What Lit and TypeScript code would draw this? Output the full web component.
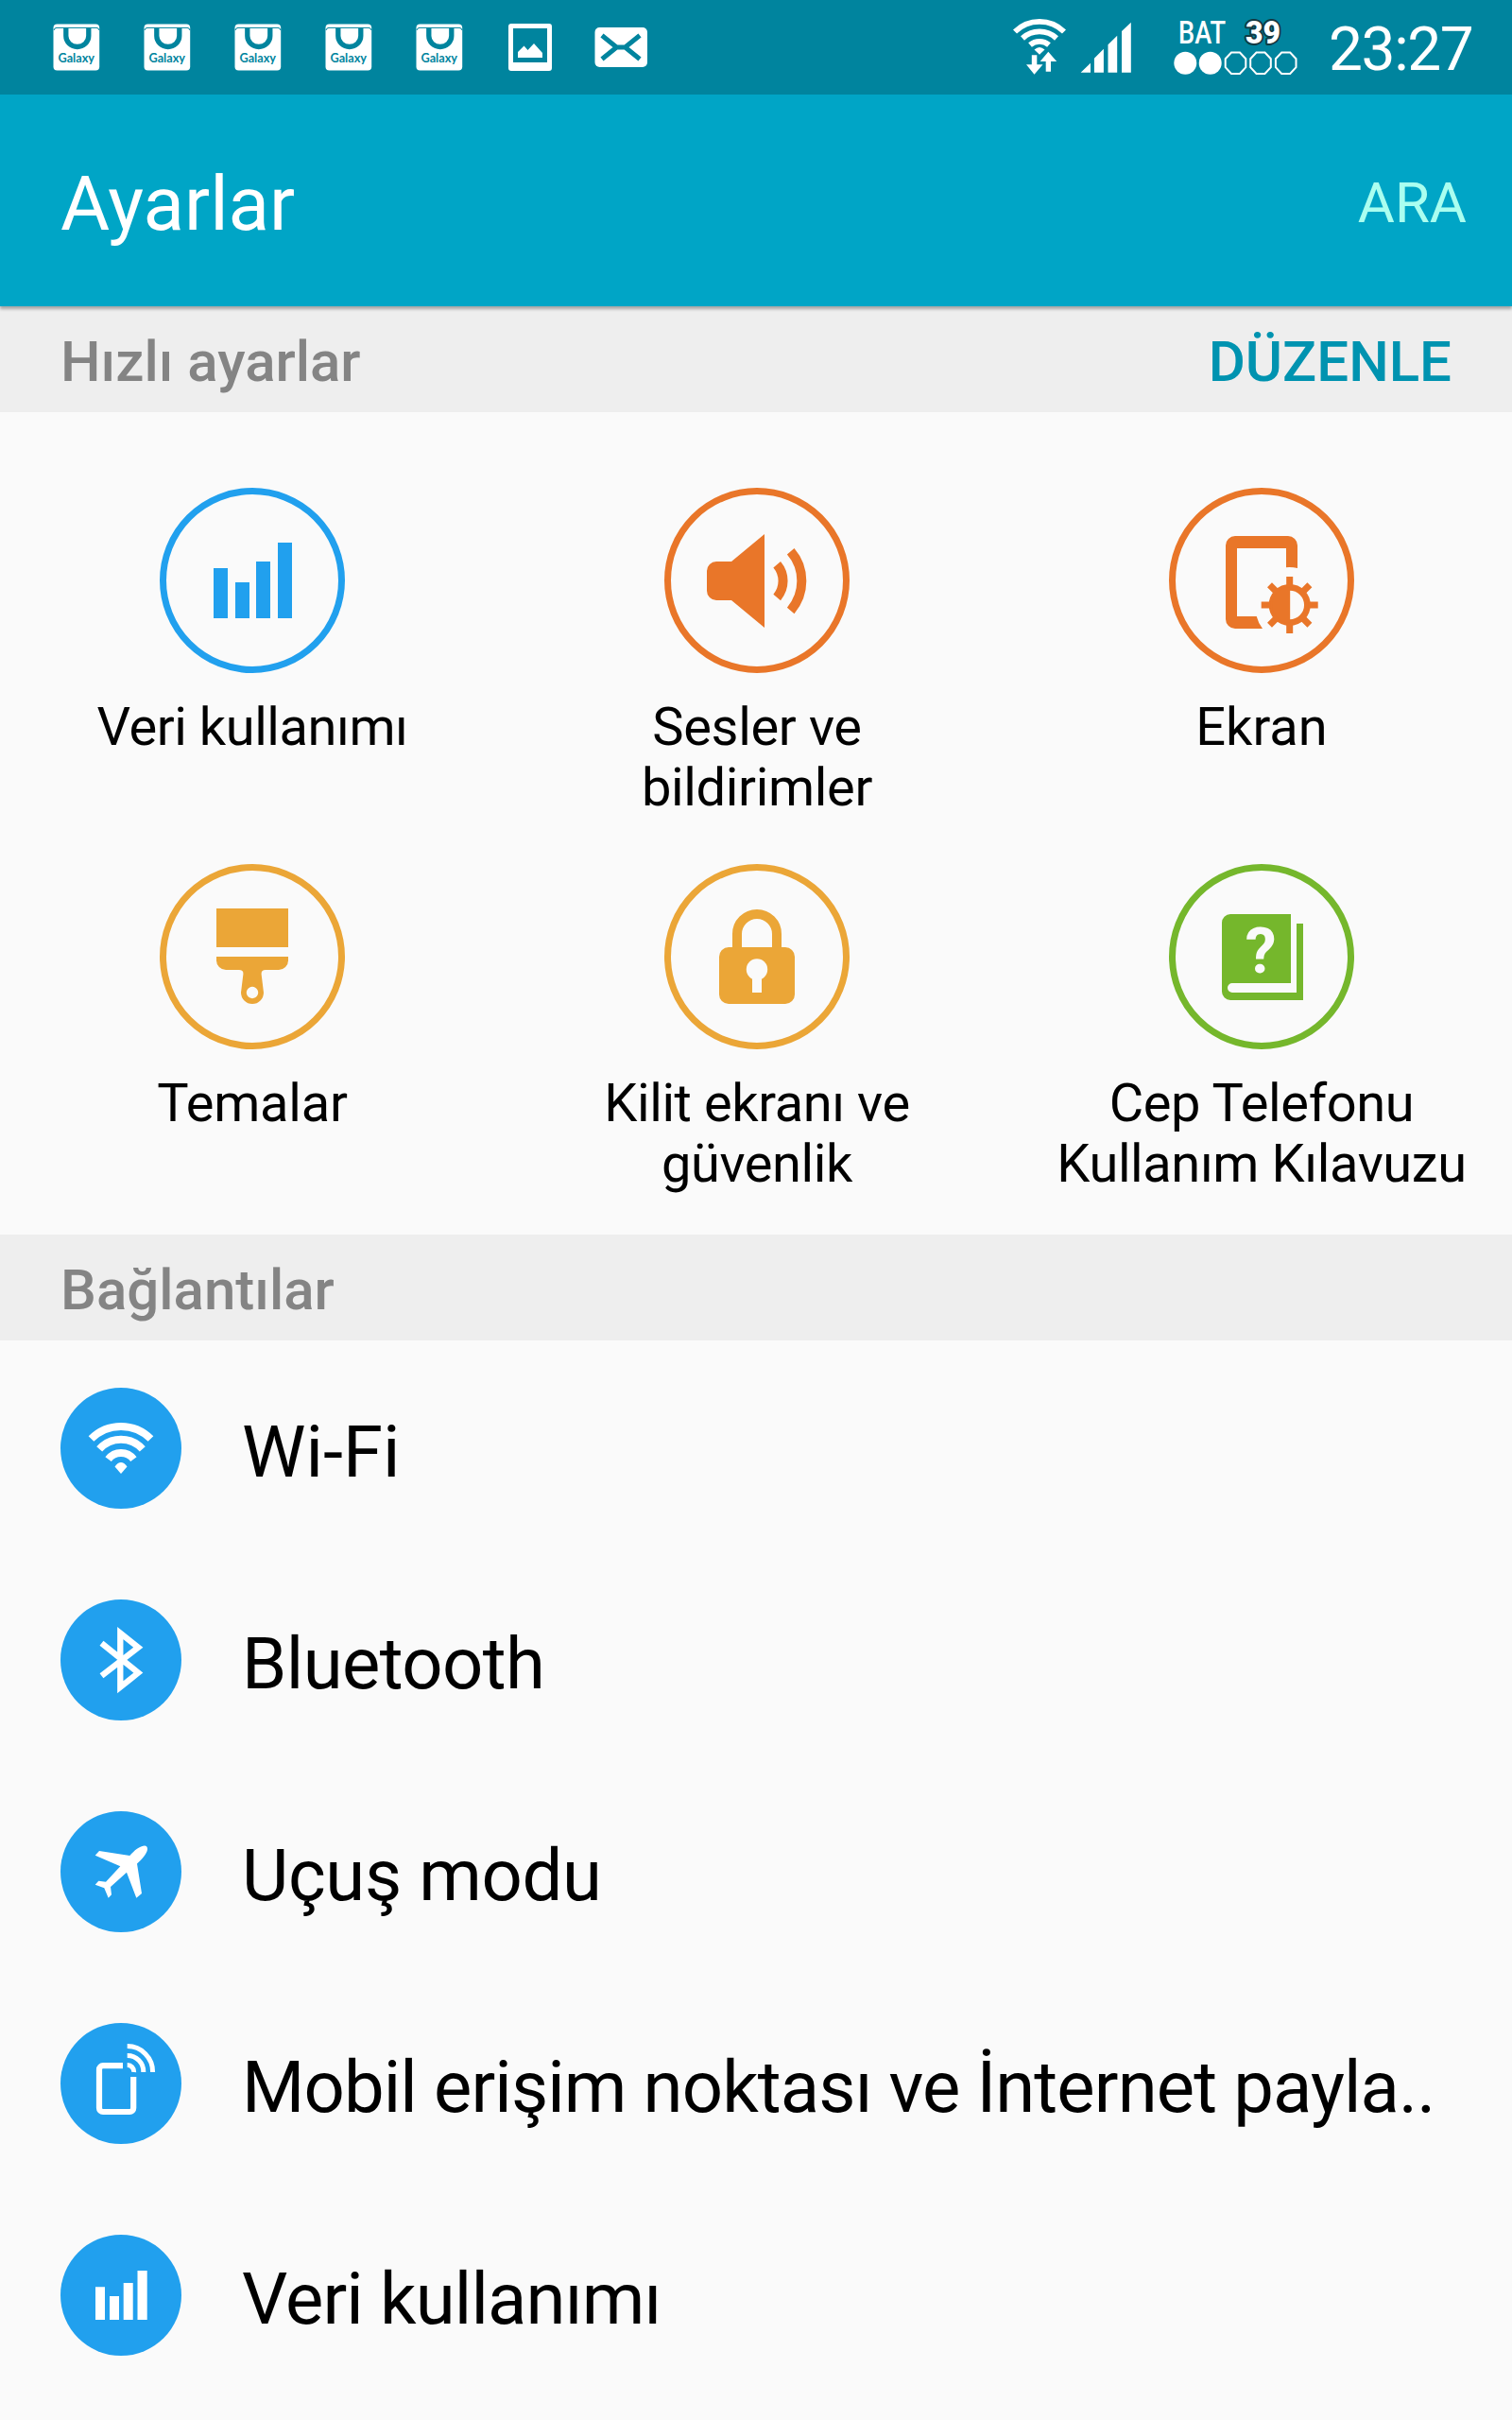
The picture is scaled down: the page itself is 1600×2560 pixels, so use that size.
import { LitElement, html, css, svg, SVGTemplateResult } from "lit";
import { customElement, property } from "lit/decorators.js";

const quickIcons: Record<string, SVGTemplateResult> = {
  data: svg`<path d="M57 85h15v53h-15zM80 100h15v38h-15zM102 78h15v60h-15zM125 58h15v80h-15z"/>`,
  sound: svg`
    <path d="M55 78H71L106 49V148L71 119H55a10 10 0 0 1-10-10V88a10 10 0 0 1 10-10z"/>
    <g fill="none" stroke="currentColor" stroke-width="10">
      <path d="M119.2 81.2a27 27 0 0 1 0 34.8"/>
      <path d="M133.7 67.3a48 48 0 0 1 0 62.6"/>
    </g>`,
  display: svg`
    <path d="M136 85V61a10 10 0 0 0-10-10H70a10 10 0 0 0-10 10V139a10 10 0 0 0 10 10H99Q94.500 143 92.700 136H72V64H124V84.200Q130 83.700 136 85z"/>
    <circle cx="127.700" cy="124" r="18.700" fill="none" stroke="currentColor" stroke-width="6.700"/>
    <path d="M128.200 105V143A19 19 0 0 1 128.200 105z"/>
    <g fill="none" stroke="currentColor" stroke-width="7">
      <path d="M127.700 94v10M127.700 144v10M97.700 124h10M147.700 124h10"/>
      <path d="M106.500 102.800l7 7M141.900 138.200l7 7M106.500 145.200l7-7M141.900 109.800l7-7"/>
    </g>`,
  themes: svg`
    <path d="M60 47H136V88H60z"/>
    <path fill-rule="evenodd" d="M60 98H136V102a10 10 0 0 1-10 10H112q-4.700 0-4.400 4.500L110 136a12 12 0 0 1-24 0L88.400 116.500q.300-4.500-4.400-4.500H70a10 10 0 0 1-10-10zM98 129.800a6.200 6.200 0 1 0 .010 0z"/>`,
  lock: svg`
    <path d="M77 90V74a21 21 0 0 1 42 0V90" fill="none" stroke="currentColor" stroke-width="10"/>
    <rect x="58" y="88" width="80" height="60" rx="10"/>
    <circle cx="98" cy="111.500" r="11.200" fill="#fafafa"/>
    <path d="M93 118h10v18h-10z" fill="#fafafa"/>`,
  manual: svg`
    <path d="M65 53H129V126H67a5 5 0 0 0 0 10H135V63H142V144H65a9 9 0 0 1-9-9V62a9 9 0 0 1 9-9z"/>
    <text class="mark" x="97" y="115" text-anchor="middle">?</text>`,
};

const rowIcons: Record<string, SVGTemplateResult> = {
  wifi: svg`
    <g fill="none" stroke="#fff" stroke-width="8">
      <path d="M32.500 54a44.400 44.400 0 0 1 63 0"/>
      <path d="M41.200 64.900a30.700 30.700 0 0 1 45.600 0"/>
      <path d="M50.600 75.700a16.800 16.800 0 0 1 26.800 0"/>
    </g>
    <path d="M57.500 83.500Q64 74.700 70.500 83.500L64 91z"/>`,
  bluetooth: svg`<path d="M43.500 46.200L82.300 77.600 63.300 92.800V35.500L82.300 50.800 43.500 80.800" fill="none" stroke="#fff" stroke-width="6.300"/>`,
  plane: svg`<path d="M41 42L73.300 47C78 41.500 84 36.300 89.500 36.400Q92.300 37 92 40.500C91.500 45 86 51 81 55.500L86 87 80.300 91.700 70 64.700 53 80 54 88.300 50.700 91.700 46.300 81.300 36.700 77.700 40.300 73.700 48 74.700 63.300 58.300 36.700 46.700z"/>`,
  hotspot: svg`
    <path d="M66 45.200H45a4 4 0 0 0-4 4V90a4 4 0 0 0 4 4H73.200a4 4 0 0 0 4-4V57" fill="none" stroke="#fff" stroke-width="6.200"/>
    <g fill="none" stroke="#fff" stroke-width="5">
      <path d="M70.700 24.600A27 27 0 0 1 97.600 52"/>
      <path d="M70.700 34.500A17 17 0 0 1 87.800 52"/>
      <path d="M70.700 44.500A7 7 0 0 1 77.700 52"/>
    </g>`,
  data: svg`<path d="M37 55.300h10V90h-10zM52 65h10V90h-10zM66.700 51h10V90h-10zM81.500 38h10.200V90h-10.200z"/>`,
};

@customElement("status-bar")
class StatusBar extends LitElement {
  static styles = css`
    :host { display: flex; height: 100px; justify-content: space-between; padding: 0 43px 0 33px; box-sizing: border-box; background: #00849e; color: #fff; }
    .group { display: flex; }
    svg { display: block; height: 100px; fill: #fff; flex: none; }
    .slot { width: 96px; }
    .wifi { width: 56px; }
    .signal { width: 54px; margin-left: 15px; }
    .battery { width: 134px; margin-left: 45px; }
    .brand { font: 700 12.5px Lato, sans-serif; fill: #00849e; }
    .bat { font: 500 33px Roboto, sans-serif; }
    .level { font: 900 33px Roboto, sans-serif; stroke: #123a44; stroke-width: 4px; paint-order: stroke; stroke-linejoin: round; }
    .clock { font: 400 64px/100px Roboto, sans-serif; letter-spacing: -1.4px; width: 151px; margin-left: 30px; padding-top: 3px; box-sizing: border-box; white-space: nowrap; }
  `;

  private bag() {
    return html`<svg class="slot" viewBox="33 0 96 100">
      <rect x="56.500" y="25.500" width="48.700" height="49" rx="4"/>
      <path d="M57 32q.500-2.600 3-2.600H102q2.500 0 3 2.600" fill="none" stroke="#00849e"/>
      <path d="M69.800 29.500V38a12 11.500 0 0 0 24 0V29.500" fill="none" stroke="#00849e" stroke-width="5.300"/>
      <text class="brand" x="61.500" y="65.700" textLength="38.500" lengthAdjust="spacingAndGlyphs">Galaxy</text>
    </svg>`;
  }

  render() {
    return html`
      <div class="group">
        ${[0, 1, 2, 3, 4].map(() => this.bag())}
        <svg class="slot" viewBox="513 0 96 100">
          <path fill-rule="evenodd" d="M541 25H581a3 3 0 0 1 3 3V72a3 3 0 0 1-3 3H541a3 3 0 0 1-3-3V28a3 3 0 0 1 3-3zM543 30V66H579V30z"/>
          <path d="M548 61V55L554.500 48.500 558.500 53 565 46 574 56V61z"/>
        </svg>
        <svg class="slot" viewBox="609 0 96 100">
          <rect x="629.500" y="29" width="55.500" height="42" rx="5"/>
          <path d="M637 37.500L652.500 50 637 62.500M677 37.500L661.500 50 677 62.500M652 50H662" fill="none" stroke="#00849e" stroke-width="5"/>
        </svg>
      </div>
      <div class="group">
        <svg class="wifi" viewBox="1072 0 56 100">
          <g fill="none" stroke="#fff" stroke-width="5.800">
            <path d="M1074 33.500a37 37 0 0 1 52 0"/>
            <path d="M1082 40.500a26.500 26.500 0 0 1 36 0"/>
            <path d="M1090 47.500a15.500 15.500 0 0 1 20 0"/>
          </g>
          <path d="M1094.500 52.500Q1100 47.500 1105.500 52.500L1100 57.700z"/>
          <path d="M1091.800 58.300h5.500V68.300h6.200L1094.500 78.700 1086 68.300h5.800zM1109.300 54.700L1118.200 65h-6.200V75.700h-5.300V65h-6z"/>
        </svg>
        <svg class="signal" viewBox="1143 0 54 100">
          <path d="M1143.600 76.700L1154 66.700V76.700zM1157.900 76.700V61.700L1167.900 51.700V76.700zM1172.500 76.700V47.300L1182.200 37.700V76.700zM1187 76.700V33L1196.800 23.700V76.700z"/>
        </svg>
        <svg class="battery" viewBox="1242 0 134 100">
          <text class="bat" x="1247" y="46.300" textLength="50" lengthAdjust="spacingAndGlyphs">BAT</text>
          <text class="level" x="1318" y="46" textLength="37" lengthAdjust="spacingAndGlyphs">39</text>
          <circle cx="1254.300" cy="66.700" r="12"/>
          <circle cx="1280.700" cy="66.700" r="12"/>
          ${[1307.5, 1334, 1360.7].map(
            (x) => svg`<path transform="translate(${x} 66.700)" d="M-4.500-11.200h9L10.800-4.500v9L4.500 11.200h-9L-10.800 4.500v-9z" fill="none" stroke="#fff" stroke-width="2"/>`
          )}
        </svg>
        <span class="clock">23:27</span>
      </div>`;
  }
}

@customElement("quick-tile")
class QuickTile extends LitElement {
  @property() icon = "";
  @property() label = "";
  static styles = css`
    :host { display: flex; flex-direction: column; align-items: center; }
    svg { display: block; width: 196px; height: 196px; fill: currentColor; }
    .label { margin-top: 25px; font: 400 56px/64px Roboto, sans-serif; color: #000; text-align: center; white-space: pre; }
    .mark { font: 700 66px Roboto, sans-serif; fill: #fafafa; }
  `;
  render() {
    return html`<svg viewBox="0 0 196 196">
        <circle cx="98" cy="98" r="94.500" fill="none" stroke="currentColor" stroke-width="7"/>
        ${quickIcons[this.icon]}
      </svg>
      <div class="label">${this.label}</div>`;
  }
}

@customElement("setting-row")
class SettingRow extends LitElement {
  @property() icon = "";
  @property() label = "";
  static styles = css`
    :host { display: flex; align-items: center; height: 224px; padding: 0 64px; gap: 64px; }
    svg { flex: none; width: 128px; height: 128px; fill: #fff; }
    .label { font: 400 76px/90px Roboto, sans-serif; color: #000; padding-top: 8px; white-space: nowrap; }
  `;
  render() {
    return html`<svg viewBox="0 0 128 128"><circle cx="64" cy="64" r="64" fill="#21a0ee"/>${rowIcons[this.icon]}</svg>
      <span class="label">${this.label}</span>`;
  }
}

@customElement("app-root")
class AppRoot extends LitElement {
  static styles = css`
    :host { display: block; width: 1600px; height: 2560px; overflow: hidden; background: #fafafa; font-family: Roboto, sans-serif; }
    .bar { display: flex; align-items: center; justify-content: space-between; height: 224px; padding: 0 48px 0 64px; box-sizing: border-box; background: #00a5c6; color: #fff; box-shadow: 0 3px 3px rgba(0, 0, 0, 0.3); position: relative; }
    .title { font-size: 80px; line-height: 94px; padding-top: 8px; }
    .search { font-size: 60px; line-height: 70px; color: #aafff0; padding-top: 5px; }
    .section { display: flex; align-items: center; justify-content: space-between; height: 112px; padding: 5px 64px 0; box-sizing: border-box; background: #eee; color: #848484; font-size: 60px; line-height: 70px; font-weight: 500; }
    .edit { color: #0093b0; }
    .grid { display: grid; grid-template-columns: repeat(3, 534px); grid-template-rows: 398px 392px; padding-top: 80px; }
    .list { padding-top: 2px; }
  `;
  private tiles: [string, string, string, number][] = [
    ["data", "Veri kullanımı", "#21a0ee", -0.45],
    ["sound", "Sesler ve\nbildirimler", "#e97629", -0.35],
    ["display", "Ekran", "#e97629", 0],
    ["themes", "Temalar", "#eba637", -0.2],
    ["lock", "Kilit ekranı ve\ngüvenlik", "#eba637", -0.42],
    ["manual", "Cep Telefonu\nKullanım Kılavuzu", "#75b72c", -0.4],
  ];
  private rows: [string, string, number][] = [
    ["wifi", "Wi-Fi", 0],
    ["bluetooth", "Bluetooth", -0.6],
    ["plane", "Uçuş modu", -0.35],
    ["hotspot", "Mobil erişim noktası ve İnternet payla..", -0.87],
    ["data", "Veri kullanımı", -0.83],
  ];
  render() {
    return html`
      <status-bar></status-bar>
      <header class="bar"><span class="title">Ayarlar</span><span class="search">ARA</span></header>
      <div class="section"><span>Hızlı ayarlar</span><span class="edit">DÜZENLE</span></div>
      <div class="grid">
        ${this.tiles.map(([icon, label, color, tracking]) => html`<quick-tile .icon=${icon} .label=${label} style="color:${color};letter-spacing:${tracking}px"></quick-tile>`)}
      </div>
      <div class="section"><span>Bağlantılar</span></div>
      <div class="list">${this.rows.map(([icon, label, tracking]) => html`<setting-row .icon=${icon} .label=${label} style="letter-spacing:${tracking}px"></setting-row>`)}</div>`;
  }
}
